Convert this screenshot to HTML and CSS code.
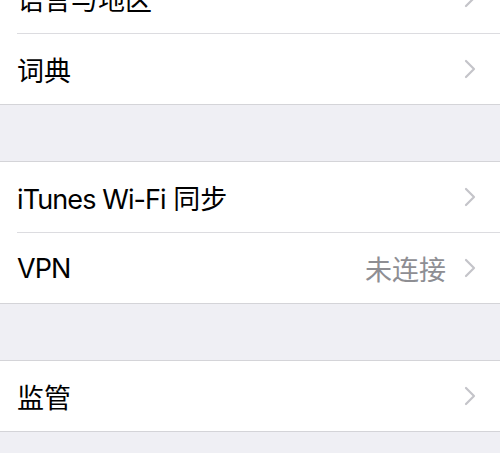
FILE: index.html
```html
<!DOCTYPE html>
<html lang="zh-CN">
<head>
    <meta charset="UTF-8">
    <meta name="viewport" content="width=device-width, initial-scale=1.0">
    <title>通用</title>
    <link rel="stylesheet" href="styles.css">
</head>
<body>
    <div class="settings">
        <div class="group first">
            <div class="cell">
                <div class="cell-body">
                    <span class="label">语言与地区</span>
                    <svg class="chevron" viewBox="0 0 12 20"><path d="M2 2 L10 10 L2 18"/></svg>
                </div>
            </div>
            <div class="cell">
                <div class="cell-body">
                    <span class="label">词典</span>
                    <svg class="chevron" viewBox="0 0 12 20"><path d="M2 2 L10 10 L2 18"/></svg>
                </div>
            </div>
        </div>

        <div class="group">
            <div class="cell">
                <div class="cell-body">
                    <span class="label"><span class="latin">iTunes Wi-Fi</span> 同步</span>
                    <svg class="chevron" viewBox="0 0 12 20"><path d="M2 2 L10 10 L2 18"/></svg>
                </div>
            </div>
            <div class="cell">
                <div class="cell-body">
                    <span class="label"><span class="latin">VPN</span></span>
                    <span class="detail">未连接</span>
                    <svg class="chevron" viewBox="0 0 12 20"><path d="M2 2 L10 10 L2 18"/></svg>
                </div>
            </div>
        </div>

        <div class="group">
            <div class="cell">
                <div class="cell-body">
                    <span class="label">监管</span>
                    <svg class="chevron" viewBox="0 0 12 20"><path d="M2 2 L10 10 L2 18"/></svg>
                </div>
            </div>
        </div>
    </div>
</body>
</html>
```

FILE: styles.css
```css
body {
    margin: 0;
    background-color: #efeff4;
    font-family: Inter, "Noto Sans CJK SC", sans-serif;
    color: #000;
}

.settings {
    overflow: hidden;
    height: 453px;
}

.group {
    background-color: white;
    border-top: 1px solid #d4d4d8;
    border-bottom: 1px solid #d4d4d8;
    margin-top: 56px;
}

.group.first {
    margin-top: -38px;
}

.cell {
    padding-left: 17px;
}

.cell-body {
    display: flex;
    align-items: center;
    height: 70px;
    padding-right: 24px;
    border-bottom: 1px solid #dcdce0;
}

.cell:last-child .cell-body {
    border-bottom: none;
}

.label {
    flex: 1;
    font-size: 27px;
}

.latin {
    letter-spacing: -0.9px;
}

.detail {
    font-size: 27px;
    color: #8e8e93;
    margin-right: 18px;
}

.chevron {
    width: 12px;
    height: 20px;
    fill: none;
    stroke: #c4c4c9;
    stroke-width: 2.2;
    stroke-linecap: round;
    stroke-linejoin: round;
}
```
